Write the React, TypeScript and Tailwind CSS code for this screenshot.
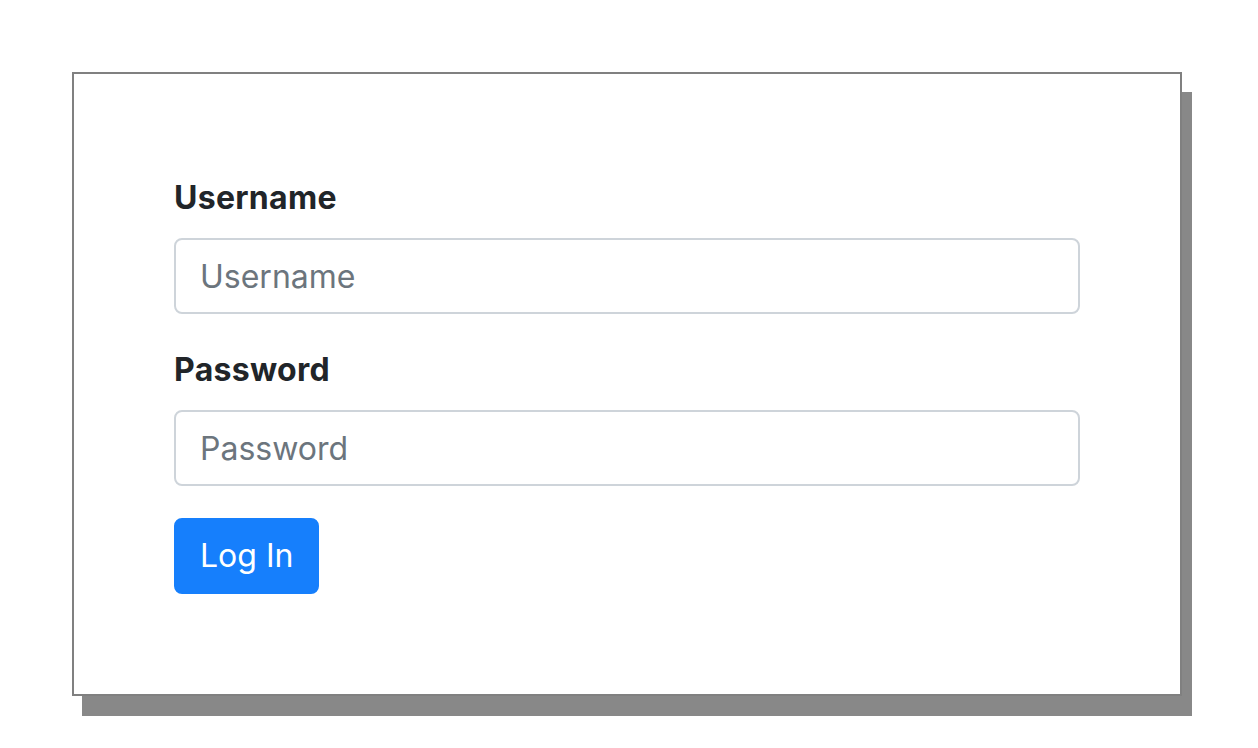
export default function App() {
  return (
    <div
      className="min-h-[748px] w-[1258px] bg-white pl-[72px] pt-[72px]"
      style={{ fontFamily: 'Inter, "Noto Sans", "Liberation Sans", sans-serif' }}
    >
      <div className="w-[1110px] border-2 border-[#808080] bg-white p-[100px] shadow-[10px_20px_0_#888888]">
        <form className="flex flex-col" onSubmit={(e) => e.preventDefault()}>
          <div className="mb-[32px] flex flex-col">
            <label className="mb-[16px] text-[32px] font-bold leading-[48px] tracking-[0.3px] text-[#212529]">Username</label>
            <input
              type="text"
              placeholder="Username"
              className="h-[76px] w-full rounded-[8px] border-2 border-[#ced4da] bg-white px-[24px] text-[32px] text-[#495057] placeholder:text-[#6c757d] outline-none"
            />
          </div>
          <div className="mb-[32px] flex flex-col">
            <label className="mb-[16px] text-[32px] font-bold leading-[48px] tracking-[0.3px] text-[#212529]">Password</label>
            <input
              type="password"
              placeholder="Password"
              className="h-[76px] w-full rounded-[8px] border-2 border-[#ced4da] bg-white px-[24px] text-[32px] text-[#495057] placeholder:text-[#6c757d] outline-none"
            />
          </div>
          <div>
            <button
              type="submit"
              className="h-[76px] rounded-[8px] border-2 border-[#167ffc] bg-[#167ffc] px-[24px] text-[32px] leading-[48px] text-white"
            >
              Log In
            </button>
          </div>
        </form>
      </div>
    </div>
  );
}
